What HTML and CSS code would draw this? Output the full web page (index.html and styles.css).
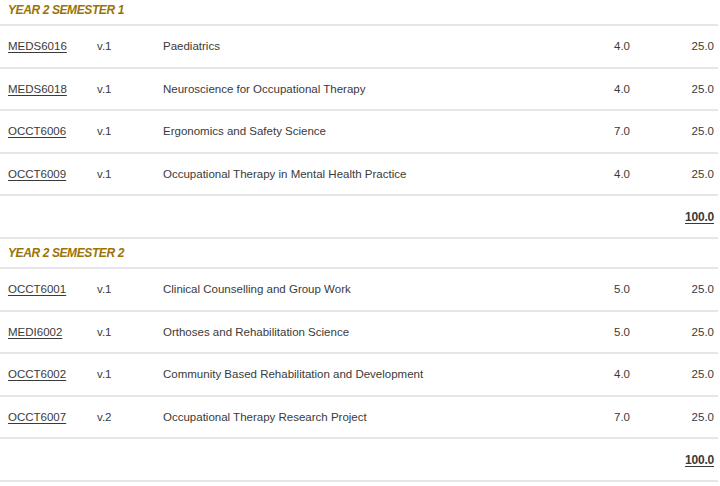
FILE: index.html
```html
<!DOCTYPE html>
<html>
<head>
<meta charset="utf-8">
<link rel="stylesheet" href="styles.css">
</head>
<body>
<div class="page">
  <section class="sem">
    <div class="sem-head">YEAR 2 SEMESTER 1</div>
    <div class="row"><a class="code">MEDS6016</a><span class="ver">v.1</span><span class="title">Paediatrics</span><span class="cred">4.0</span><span class="pct">25.0</span></div>
    <div class="row"><a class="code">MEDS6018</a><span class="ver">v.1</span><span class="title">Neuroscience for Occupational Therapy</span><span class="cred">4.0</span><span class="pct">25.0</span></div>
    <div class="row"><a class="code">OCCT6006</a><span class="ver">v.1</span><span class="title">Ergonomics and Safety Science</span><span class="cred">7.0</span><span class="pct">25.0</span></div>
    <div class="row"><a class="code">OCCT6009</a><span class="ver">v.1</span><span class="title">Occupational Therapy in Mental Health Practice</span><span class="cred">4.0</span><span class="pct">25.0</span></div>
    <div class="row total"><span class="sum">100.0</span></div>
  </section>
  <section class="sem">
    <div class="sem-head">YEAR 2 SEMESTER 2</div>
    <div class="row"><a class="code">OCCT6001</a><span class="ver">v.1</span><span class="title">Clinical Counselling and Group Work</span><span class="cred">5.0</span><span class="pct">25.0</span></div>
    <div class="row"><a class="code">MEDI6002</a><span class="ver">v.1</span><span class="title">Orthoses and Rehabilitation Science</span><span class="cred">5.0</span><span class="pct">25.0</span></div>
    <div class="row"><a class="code">OCCT6002</a><span class="ver">v.1</span><span class="title">Community Based Rehabilitation and Development</span><span class="cred">4.0</span><span class="pct">25.0</span></div>
    <div class="row"><a class="code">OCCT6007</a><span class="ver">v.2</span><span class="title">Occupational Therapy Research Project</span><span class="cred">7.0</span><span class="pct">25.0</span></div>
    <div class="row total last"><span class="sum">100.0</span></div>
  </section>
</div>
</body>
</html>
```
FILE: styles.css
```css
html, body {
  margin: 0;
  padding: 0;
  background: #ffffff;
}
body {
  font-family: "Liberation Sans", Arial, sans-serif;
  font-size: 11.5px;
  color: #3a3a3a;
}
.page {
  width: 718px;
  margin-top: -4px;
}
.sem-head {
  height: 28px;
  display: flex;
  align-items: center;
  padding-left: 8px;
  font-size: 12px;
  font-weight: bold;
  font-style: italic;
  color: #9a7406;
  letter-spacing: -0.4px;
  border-bottom: 2px solid #e6e6e6;
}
.row {
  height: 40.6px;
  display: flex;
  align-items: center;
  padding-right: 4px;
  border-bottom: 2px solid #e6e6e6;
}
.code {
  width: 89px;
  padding-left: 8px;
  color: #3a3a3a;
  text-decoration: underline;
  text-underline-offset: 2px;
}
.ver {
  width: 66px;
}
.title {
  flex: 1;
}
.cred {
  width: 60px;
  text-align: right;
}
.pct {
  width: 84px;
  text-align: right;
}
.total {
  justify-content: flex-end;
}
.sum {
  font-size: 12px;
  font-weight: bold;
  letter-spacing: -0.2px;
  text-decoration: underline;
  text-underline-offset: 2px;
}
```
